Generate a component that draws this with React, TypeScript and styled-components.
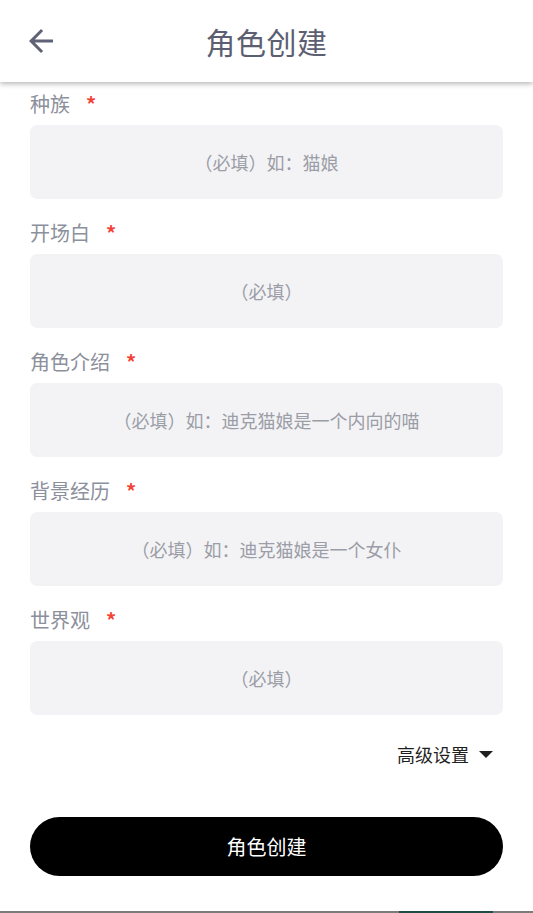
import React from "react";
import styled, { createGlobalStyle } from "styled-components";

const fields = [
  { label: "种族", placeholder: "（必填）如：猫娘" },
  { label: "开场白", placeholder: "（必填）" },
  { label: "角色介绍", placeholder: "（必填）如：迪克猫娘是一个内向的喵" },
  { label: "背景经历", placeholder: "（必填）如：迪克猫娘是一个女仆" },
  { label: "世界观", placeholder: "（必填）" },
];

const GlobalStyle = createGlobalStyle`
  html, body {
    margin: 0;
    padding: 0;
    background: #ffffff;
  }
  body {
    font-family: "Noto Sans CJK SC", "Noto Sans", sans-serif;
  }
  * {
    box-sizing: border-box;
  }
`;

export default function App() {
  return (
    <Page>
      <GlobalStyle />
      <Header>
        <BackButton aria-label="返回">
          <svg width="36" height="36" viewBox="0 0 24 24" fill="currentColor">
            <path d="M20 11H7.83l5.59-5.59L12 4l-8 8 8 8 1.41-1.41L7.83 13H20v-2z" />
          </svg>
        </BackButton>
        <Title>角色创建</Title>
      </Header>

      <Form>
        {fields.map((f) => (
          <Field key={f.label}>
            <Label>
              {f.label}
              <Required>*</Required>
            </Label>
            <Input placeholder={f.placeholder} />
          </Field>
        ))}

        <Advanced>
          高级设置
          <Caret />
        </Advanced>

        <SubmitButton>角色创建</SubmitButton>
      </Form>

      <BottomBar>
        <BarSegment $flex={399} $color="#7b7b7b" />
        <BarSegment $flex={94} $color="#1d4d45" />
        <BarSegment $flex={40} $color="#7b7b7b" />
      </BottomBar>
    </Page>
  );
}

const Page = styled.div`
  width: 533px;
  min-height: 913px;
  display: flex;
  flex-direction: column;
  background: #fff;
`;

const Header = styled.header`
  position: relative;
  height: 82px;
  display: flex;
  align-items: center;
  justify-content: center;
  background: #fff;
  box-shadow: 0 2px 5px rgba(0, 0, 0, 0.28);
  z-index: 1;
`;

const BackButton = styled.button`
  position: absolute;
  left: 23px;
  top: 23px;
  width: 36px;
  height: 36px;
  padding: 0;
  border: none;
  background: none;
  color: #5f6275;
  display: flex;
`;

const Title = styled.h1`
  margin: 0;
  font-size: 30px;
  font-weight: 400;
  line-height: 40px;
  color: #5c5f72;
  letter-spacing: 0.5px;
`;

const Form = styled.main`
  display: flex;
  flex-direction: column;
  gap: 20px;
  padding: 8px 30px 0;
`;

const Field = styled.div`
  display: flex;
  flex-direction: column;
  gap: 7px;
`;

const Label = styled.div`
  font-size: 20px;
  line-height: 28px;
  color: #8c909c;
  display: flex;
  align-items: center;
`;

const Required = styled.span`
  margin-left: 16px;
  color: #f44336;
  font-size: 20px;
  font-weight: 700;
`;

const Input = styled.input`
  height: 74px;
  width: 100%;
  border: none;
  outline: none;
  border-radius: 7px;
  background: #f3f3f5;
  text-align: center;
  font-family: inherit;
  font-size: 18px;
  color: #333;

  &::placeholder {
    color: #9b9da7;
  }
`;

const Advanced = styled.div`
  margin-top: 7px;
  align-self: flex-end;
  margin-right: 10px;
  display: flex;
  align-items: center;
  gap: 10px;
  font-size: 18px;
  line-height: 24px;
  color: #1f1f1f;
`;

const Caret = styled.span`
  width: 0;
  height: 0;
  border-left: 7.5px solid transparent;
  border-right: 7.5px solid transparent;
  border-top: 7px solid #1f1f1f;
`;

const SubmitButton = styled.button`
  margin-top: 31px;
  height: 59px;
  width: 100%;
  border: none;
  border-radius: 30px;
  background: #000;
  color: #fff;
  font-family: inherit;
  font-size: 20px;
`;

const BottomBar = styled.div`
  margin-top: auto;
  height: 2px;
  display: flex;
`;

const BarSegment = styled.div<{ $flex: number; $color: string }>`
  flex: ${(p) => p.$flex};
  background: ${(p) => p.$color};
`;
